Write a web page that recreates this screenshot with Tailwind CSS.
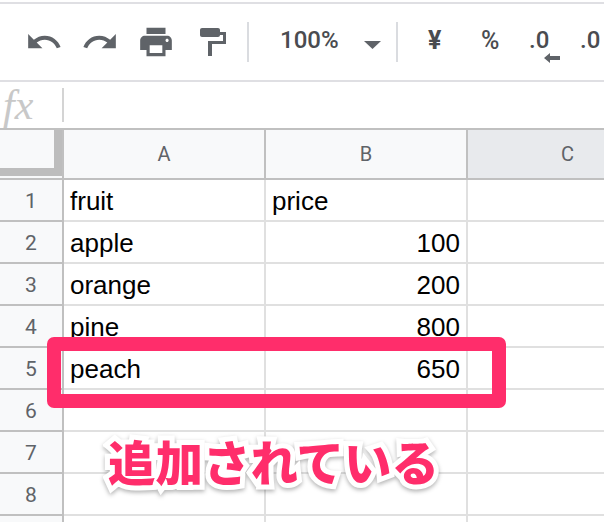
<!DOCTYPE html>
<html lang="en">
<head>
  <meta charset="UTF-8" />
  <title>Sheet</title>
  <script src="https://cdn.jsdelivr.net/npm/@tailwindcss/browser@4"></script>
</head>
<body class="relative w-[604px] h-[522px] overflow-hidden bg-white font-['Liberation_Sans',sans-serif]">

  <!-- Toolbar -->
  <div class="pt-[2px]">
    <div class="h-[80px] border-t-2 border-b-2 border-[#dfdfe3] flex items-center font-['Roboto',sans-serif] text-[#4a4c50]">
      <svg class="ml-[25px] w-[38px] h-[38px] shrink-0" viewBox="0 0 24 24" fill="#5f6368"><path d="M12.5 8c-2.65 0-5.05.99-6.9 2.6L2 7v9h9l-3.62-3.62c1.39-1.16 3.16-1.88 5.12-1.88 3.54 0 6.55 2.31 7.6 5.5l2.37-.78C21.08 11.03 17.15 8 12.5 8z"/></svg>
      <svg class="ml-[18px] w-[38px] h-[38px] shrink-0" viewBox="0 0 24 24" fill="#5f6368"><path d="M11.5 8c2.65 0 5.05.99 6.9 2.6L22 7v9h-9l3.62-3.62C15.23 11.22 13.46 10.5 11.5 10.5c-3.54 0-6.55 2.31-7.6 5.5l-2.37-.78C2.92 11.03 6.85 8 11.5 8z"/></svg>
      <svg class="ml-[18px] w-[38px] h-[38px] shrink-0" viewBox="0 0 24 24" fill="#5f6368"><path d="M19 8H5c-1.66 0-3 1.34-3 3v6h4v4h12v-4h4v-6c0-1.66-1.34-3-3-3zm-3 11H8v-5h8v5zm3-7c-.55 0-1-.45-1-1s.45-1 1-1 1 .45 1 1-.45 1-1 1zm-1-9H6v4h12V3z"/></svg>
      <svg class="ml-[19px] w-[38px] h-[38px] shrink-0" viewBox="0 0 38 38" fill="#5f6368"><path d="M8 5h16c1.100 0 2 .9 2 2v5c0 1.100-.9 2-2 2H8c-1.100 0-2-.9-2-2V7c0-1.100.9-2 2-2z"/><path d="M26 9h6v12H18v12h-4V18h15v-6h-3z"/></svg>
      <div class="ml-[15px] w-[2px] h-[40px] bg-[#dadce0] shrink-0"></div>
      <span class="ml-[31px] -mt-[4px] text-[24px] leading-none w-[60px] shrink-0 font-medium">100%</span>
      <svg class="ml-[24px] w-[17px] h-[8px] mt-[5px] shrink-0" viewBox="0 0 17 8" fill="#5f6368"><path d="M0 0h17l-8.500 8z"/></svg>
      <div class="ml-[15px] w-[2px] h-[40px] bg-[#dadce0] shrink-0"></div>
      <span class="ml-[30px] -mt-[4px] text-[25px] leading-none font-bold w-[16px] shrink-0">¥</span>
      <span class="ml-[37px] -mt-[4px] text-[25px] leading-none font-medium w-[20px] shrink-0">%</span>
      <div class="ml-[28px] -mt-[4px] relative w-[22px] shrink-0 text-[24px] leading-none font-medium">
        .0
        <svg class="absolute left-[15px] top-[25px] w-[16px] h-[10px]" viewBox="0 0 16 10" fill="#5f6368"><path d="M6 0v3h10v4H6v3L0 5z"/></svg>
      </div>
      <span class="ml-[29px] -mt-[4px] text-[24px] leading-none font-medium shrink-0">.0</span>
    </div>
  </div>

  <!-- Formula bar -->
  <div class="h-[48px] border-b-2 border-[#c0c0c0] flex items-center">
    <span class="ml-[3px] w-[59px] text-[42px] leading-none italic text-[#c8c8c8] font-['Liberation_Serif',serif]">fx</span>
    <div class="w-[2px] h-[34px] bg-[#d4d4d4]"></div>
  </div>

  <!-- Grid -->
  <div class="h-[392px] overflow-hidden grid content-start grid-cols-[64px_202px_202px_136px] grid-rows-[50px] auto-rows-[42px] text-[26px] text-black">
    <!-- header -->
    <div class="bg-[#f8f9fa] border-b-2 border-r-2 border-[#c0c0c0] relative">
      <div class="absolute left-0 top-0 w-[62px] h-[46px] border-r-[8px] border-b-[8px] border-[#bdbdbd]"></div>
    </div>
    <div class="bg-[#f8f9fa] border-b-2 border-r-2 border-[#c0c0c0] flex items-center justify-center font-['Roboto',sans-serif] text-[20px] text-[#5f6368]">A</div>
    <div class="bg-[#f8f9fa] border-b-2 border-r-2 border-[#c0c0c0] flex items-center justify-center font-['Roboto',sans-serif] text-[20px] text-[#5f6368]">B</div>
    <div class="bg-[#e8eaed] border-b-2 border-[#c0c0c0] flex items-center pl-[93px] font-['Roboto',sans-serif] text-[20px] text-[#5f6368]">C</div>

    <div class="bg-[#f8f9fa] border-b-2 border-r-2 border-[#c0c0c0] flex items-center justify-center pt-[3px] font-['Roboto',sans-serif] text-[21px] text-[#5f6368]">1</div>
    <div class="border-b-2 border-r-2 border-[#e0e0e0] flex items-center px-[6px] pt-[3px]">fruit</div>
    <div class="border-b-2 border-r-2 border-[#e0e0e0] flex items-center px-[6px] pt-[3px]">price</div>
    <div class="border-b-2 border-[#e0e0e0]"></div>

    <div class="bg-[#f8f9fa] border-b-2 border-r-2 border-[#c0c0c0] flex items-center justify-center pt-[3px] font-['Roboto',sans-serif] text-[21px] text-[#5f6368]">2</div>
    <div class="border-b-2 border-r-2 border-[#e0e0e0] flex items-center px-[6px] pt-[3px]">apple</div>
    <div class="border-b-2 border-r-2 border-[#e0e0e0] flex items-center justify-end px-[6px] pt-[3px]">100</div>
    <div class="border-b-2 border-[#e0e0e0]"></div>

    <div class="bg-[#f8f9fa] border-b-2 border-r-2 border-[#c0c0c0] flex items-center justify-center pt-[3px] font-['Roboto',sans-serif] text-[21px] text-[#5f6368]">3</div>
    <div class="border-b-2 border-r-2 border-[#e0e0e0] flex items-center px-[6px] pt-[3px]">orange</div>
    <div class="border-b-2 border-r-2 border-[#e0e0e0] flex items-center justify-end px-[6px] pt-[3px]">200</div>
    <div class="border-b-2 border-[#e0e0e0]"></div>

    <div class="bg-[#f8f9fa] border-b-2 border-r-2 border-[#c0c0c0] flex items-center justify-center pt-[3px] font-['Roboto',sans-serif] text-[21px] text-[#5f6368]">4</div>
    <div class="border-b-2 border-r-2 border-[#e0e0e0] flex items-center px-[6px] pt-[3px]">pine</div>
    <div class="border-b-2 border-r-2 border-[#e0e0e0] flex items-center justify-end px-[6px] pt-[3px]">800</div>
    <div class="border-b-2 border-[#e0e0e0]"></div>

    <div class="bg-[#f8f9fa] border-b-2 border-r-2 border-[#c0c0c0] flex items-center justify-center pt-[3px] font-['Roboto',sans-serif] text-[21px] text-[#5f6368]">5</div>
    <div class="border-b-2 border-r-2 border-[#e0e0e0] flex items-center px-[6px] pt-[3px]">peach</div>
    <div class="border-b-2 border-r-2 border-[#e0e0e0] flex items-center justify-end px-[6px] pt-[3px]">650</div>
    <div class="border-b-2 border-[#e0e0e0]"></div>

    <div class="bg-[#f8f9fa] border-b-2 border-r-2 border-[#c0c0c0] flex items-center justify-center pt-[3px] font-['Roboto',sans-serif] text-[21px] text-[#5f6368]">6</div>
    <div class="border-b-2 border-r-2 border-[#e0e0e0]"></div>
    <div class="border-b-2 border-r-2 border-[#e0e0e0]"></div>
    <div class="border-b-2 border-[#e0e0e0]"></div>

    <div class="bg-[#f8f9fa] border-b-2 border-r-2 border-[#c0c0c0] flex items-center justify-center pt-[3px] font-['Roboto',sans-serif] text-[21px] text-[#5f6368]">7</div>
    <div class="border-b-2 border-r-2 border-[#e0e0e0]"></div>
    <div class="border-b-2 border-r-2 border-[#e0e0e0]"></div>
    <div class="border-b-2 border-[#e0e0e0]"></div>

    <div class="bg-[#f8f9fa] border-b-2 border-r-2 border-[#c0c0c0] flex items-center justify-center pt-[3px] font-['Roboto',sans-serif] text-[21px] text-[#5f6368]">8</div>
    <div class="border-b-2 border-r-2 border-[#e0e0e0]"></div>
    <div class="border-b-2 border-r-2 border-[#e0e0e0]"></div>
    <div class="border-b-2 border-[#e0e0e0]"></div>

    <div class="bg-[#f8f9fa] border-r-2 border-[#c0c0c0]"></div>
    <div class="border-r-2 border-[#e0e0e0]"></div>
    <div class="border-r-2 border-[#e0e0e0]"></div>
    <div></div>
  </div>

  <!-- Annotation over the grid -->
  <div class="absolute left-[47px] top-[337px] w-[459px] h-[71px] border-[14px] border-[#ff2d6b] rounded-[7px]"></div>
  <div class="absolute left-[108px] top-[429px] whitespace-nowrap text-[47.500px] leading-[64px] font-black text-[#ff2d6b] font-['Noto_Sans_CJK_JP',sans-serif] [-webkit-text-stroke:10px_#fff] [paint-order:stroke_fill] drop-shadow-[0_2px_2px_rgba(0,0,0,0.3)]">追加されている</div>

</body>
</html>
